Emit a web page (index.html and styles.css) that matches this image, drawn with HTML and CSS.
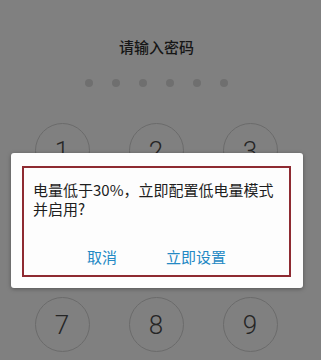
FILE: index.html
```html
<!DOCTYPE html>
<html>
<head>
<meta charset="utf-8">
<link rel="stylesheet" href="styles.css">
</head>
<body>
<div class="screen">
  <div class="title">请输入密码</div>
  <div class="dots">
    <span class="dot"></span><span class="dot"></span><span class="dot"></span>
    <span class="dot"></span><span class="dot"></span><span class="dot"></span>
  </div>
  <div class="keypad">
    <div class="key">1</div><div class="key">2</div><div class="key">3</div>
    <div class="key">4</div><div class="key">5</div><div class="key">6</div>
    <div class="key">7</div><div class="key">8</div><div class="key">9</div>
  </div>
  <div class="dialog">
    <div class="frame">
      <div class="msg">电量低于30%，立即配置低电量模式并启用?</div>
      <div class="actions">
        <span class="btn cancel">取消</span>
        <span class="btn ok">立即设置</span>
      </div>
    </div>
  </div>
</div>
</body>
</html>
```
FILE: styles.css
```css
html, body {
  margin: 0;
  padding: 0;
}
body {
  background: #808080;
  font-family: "Noto Sans CJK SC", "Noto Sans", sans-serif;
}
.screen {
  position: relative;
  width: 321px;
  height: 360px;
  overflow: hidden;
  display: flex;
  flex-direction: column;
  align-items: center;
}
.title {
  margin-top: 36px;
  font-size: 15px;
  line-height: 22px;
  color: #161616;
  font-weight: 500;
  margin-left: -8px;
}
.dots {
  margin-top: 21px;
  display: flex;
  gap: 19px;
  margin-left: -9px;
}
.dot {
  width: 8px;
  height: 8px;
  border-radius: 50%;
  background: #6f6f6f;
}
.keypad {
  margin-top: 36px;
  display: grid;
  grid-template-columns: repeat(3, 55px);
  grid-auto-rows: 55px;
  column-gap: 39px;
  row-gap: 32px;
  margin-left: -9px;
}
.key {
  box-sizing: border-box;
  border: 1px solid #6b6b6b;
  border-radius: 50%;
  display: flex;
  align-items: center;
  justify-content: center;
  font-family: "Roboto", sans-serif;
  font-weight: 300;
  font-size: 26px;
  color: #262626;
}
.dialog {
  position: absolute;
  left: 11px;
  top: 153px;
  width: 292px;
  height: 135px;
  background: #fdfdfd;
  border-radius: 3px;
  box-shadow: 0 1px 4px rgba(0,0,0,0.35);
  box-sizing: border-box;
  padding: 13px 0 0 11px;
}
.frame {
  box-sizing: border-box;
  width: 269px;
  height: 111px;
  border: 2px solid #8e2a31;
  padding: 12px 14px 0 9px;
  display: flex;
  flex-direction: column;
}
.msg {
  font-size: 15px;
  line-height: 19px;
  color: #1e1e1e;
}
.actions {
  margin-top: 29px;
  display: flex;
  padding-left: 54px;
  gap: 49px;
}
.btn {
  font-size: 15px;
  line-height: 19px;
  color: #2489c4;
}
```
